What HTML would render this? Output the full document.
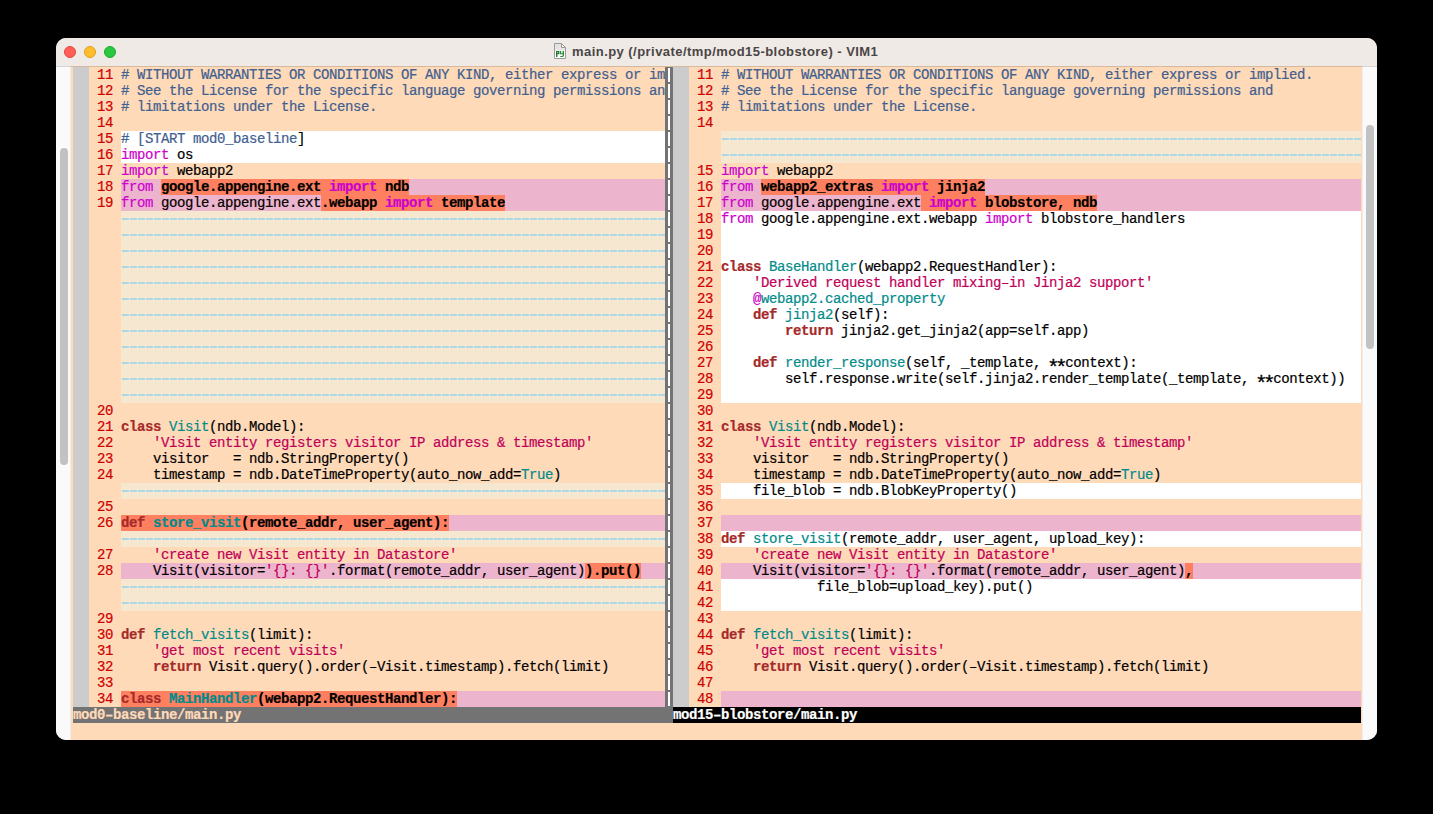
<!DOCTYPE html>
<html><head><meta charset="utf-8">
<style>
html,body{margin:0;padding:0;}
body{width:1433px;height:814px;background:#000;position:relative;overflow:hidden;}
.win{position:absolute;left:56px;top:38px;width:1321px;height:702px;border-radius:10px;overflow:hidden;background:#fafafa;}
.in{position:absolute;left:-56px;top:-38px;width:1433px;height:814px;}
.tb{position:absolute;left:56px;top:38px;width:1321px;height:28px;background:#efeae6;}
.tl{position:absolute;left:56px;top:66px;width:1321px;height:1px;background:rgba(0,0,0,0.15);z-index:5;}
.btn{position:absolute;top:46px;width:12px;height:12px;border-radius:50%;box-sizing:border-box;}
.title{position:absolute;left:572px;top:43px;height:18px;font:bold 13px/18px "Liberation Sans",sans-serif;color:#4a4545;white-space:pre;letter-spacing:0.45px;}
.ico{position:absolute;left:554px;top:43px;width:12px;height:16px;}
.peach{position:absolute;left:71px;top:66px;width:1291px;height:674px;background:#ffdab9;}
.sb{position:absolute;top:66px;height:674px;background:#fafafa;}
.sbl{box-shadow:inset -1px 0 #eceef0;}
.sbr{box-shadow:inset 1px 0 #eceef0;}
.th{position:absolute;width:8px;border-radius:4px;background:#c2c2c2;}
.r{position:absolute;left:73px;height:16px;display:flex;white-space:pre;font-family:"Liberation Mono",monospace;font-size:14px;letter-spacing:-0.4px;line-height:16px;color:#000;-webkit-text-stroke:0.2px currentColor;}
.r i,.r b{display:block;height:16px;font-style:normal;font-weight:normal;overflow:hidden;}
.f{width:16px;background:#ccc;}
.n{width:32px;color:#cd0000;}
.t1{width:544px;}
.t2{width:640px;}
.a{background:#fff;}
.ch{background:#edb5cd;}
.d{background:linear-gradient(90deg,#add8e6 7px,transparent 7px) 1px 7px/8px 2px repeat-x,#f6e8d0;}
.vs{width:8px;background:linear-gradient(#fff,#fff) 3px 1px/2px 14px no-repeat,#737373;}
.r .ast{display:inline-block;height:auto;overflow:visible;transform:translateY(5px) scale(1.5);}
.c{color:#406090}
.s{color:#c00058}
.i{color:#008b8b}
.k{color:#a52a2a;font-weight:bold}
.p{color:#cd00cd}
.x{font-weight:bold;background:#ff8060}
.st{position:absolute;top:707px;height:16px;white-space:pre;font-family:"Liberation Mono",monospace;font-size:14px;letter-spacing:-0.4px;line-height:16px;font-weight:bold;-webkit-text-stroke:0.2px currentColor;}
</style></head><body>
<div class="win"><div class="in">
<div class="tb"></div>
<div class="btn" style="left:64px;background:#ff5f57;border:0.5px solid #e2463f"></div>
<div class="btn" style="left:84px;background:#febc2e;border:0.5px solid #e1a116"></div>
<div class="btn" style="left:104px;background:#28c840;border:0.5px solid #1aab29"></div>
<svg class="ico" viewBox="0 0 12 16" width="12" height="16"><defs><linearGradient id="pg" x1="0" y1="0" x2="0" y2="1"><stop offset="0" stop-color="#e2e2e2"/><stop offset="0.45" stop-color="#e6e6e6"/><stop offset="0.5" stop-color="#fdfdfd"/><stop offset="1" stop-color="#fff"/></linearGradient></defs><path d="M0.5 0.5H7.5L11.5 4.5V15.5H0.5Z" fill="url(#pg)" stroke="#9e9a9a" stroke-width="1"/><path d="M7.5 0.5V4.5H11.5Z" fill="#fff" stroke="#9e9a9a" stroke-width="1" stroke-linejoin="round"/><path d="M2 8H5.3V11.2H3.4V14H2Z M3.4 9.1V10.1H4.1V9.1Z" fill="#1f7a2a" fill-rule="evenodd"/><path d="M5.8 8H7.2V10.2H8.6V8H10V12.6Q10 14 8.6 14H6.3V12.9H8.6V11.3H5.8Z" fill="#2a8a36"/></svg>
<div class="title">main.py (/private/tmp/mod15-blobstore) - VIM1</div>
<div class="tl"></div>
<div class="peach"></div>
<div class="sb sbl" style="left:56px;width:15px"></div>
<div class="sb sbr" style="left:1362px;width:15px"></div>
<div class="th" style="left:60px;top:148px;height:317px"></div>
<div class="th" style="left:1366px;top:125px;height:224px"></div>
<div class="r" style="top:67px"><i class="f"></i><b class="n"> 11 </b><b class="t1"><span class="c"># WITHOUT WARRANTIES OR CONDITIONS OF ANY KIND, either express or im</span></b><i class="vs"></i><i class="f"></i><b class="n"> 11 </b><b class="t2"><span class="c"># WITHOUT WARRANTIES OR CONDITIONS OF ANY KIND, either express or implied.</span></b></div>
<div class="r" style="top:83px"><i class="f"></i><b class="n"> 12 </b><b class="t1"><span class="c"># See the License for the specific language governing permissions an</span></b><i class="vs"></i><i class="f"></i><b class="n"> 12 </b><b class="t2"><span class="c"># See the License for the specific language governing permissions and</span></b></div>
<div class="r" style="top:99px"><i class="f"></i><b class="n"> 13 </b><b class="t1"><span class="c"># limitations under the License.</span></b><i class="vs"></i><i class="f"></i><b class="n"> 13 </b><b class="t2"><span class="c"># limitations under the License.</span></b></div>
<div class="r" style="top:115px"><i class="f"></i><b class="n"> 14 </b><b class="t1"></b><i class="vs"></i><i class="f"></i><b class="n"> 14 </b><b class="t2"></b></div>
<div class="r" style="top:131px"><i class="f"></i><b class="n"> 15 </b><b class="t1 a"><span class="c"># [START mod0_baseline</span>]</b><i class="vs"></i><i class="f"></i><b class="n">    </b><b class="t2 d"></b></div>
<div class="r" style="top:147px"><i class="f"></i><b class="n"> 16 </b><b class="t1 a"><span class="p">import</span> os</b><i class="vs"></i><i class="f"></i><b class="n">    </b><b class="t2 d"></b></div>
<div class="r" style="top:163px"><i class="f"></i><b class="n"> 17 </b><b class="t1"><span class="p">import</span> webapp2</b><i class="vs"></i><i class="f"></i><b class="n"> 15 </b><b class="t2"><span class="p">import</span> webapp2</b></div>
<div class="r" style="top:179px"><i class="f"></i><b class="n"> 18 </b><b class="t1 ch"><span class="p">from</span> <span class="x">google.appengine.ext </span><span class="p x">import</span><span class="x"> ndb</span></b><i class="vs"></i><i class="f"></i><b class="n"> 16 </b><b class="t2 ch"><span class="p">from</span> <span class="x">webapp2_extras </span><span class="p x">import</span><span class="x"> jinja2</span></b></div>
<div class="r" style="top:195px"><i class="f"></i><b class="n"> 19 </b><b class="t1 ch"><span class="p">from</span> google.appengine.ext<span class="x">.webapp </span><span class="p x">import</span><span class="x"> template</span></b><i class="vs"></i><i class="f"></i><b class="n"> 17 </b><b class="t2 ch"><span class="p">from</span> google.appengine.ext<span class="x"> </span><span class="p x">import</span><span class="x"> blobstore, ndb</span></b></div>
<div class="r" style="top:211px"><i class="f"></i><b class="n">    </b><b class="t1 d"></b><i class="vs"></i><i class="f"></i><b class="n"> 18 </b><b class="t2 a"><span class="p">from</span> google.appengine.ext.webapp <span class="p">import</span> blobstore_handlers</b></div>
<div class="r" style="top:227px"><i class="f"></i><b class="n">    </b><b class="t1 d"></b><i class="vs"></i><i class="f"></i><b class="n"> 19 </b><b class="t2 a"></b></div>
<div class="r" style="top:243px"><i class="f"></i><b class="n">    </b><b class="t1 d"></b><i class="vs"></i><i class="f"></i><b class="n"> 20 </b><b class="t2 a"></b></div>
<div class="r" style="top:259px"><i class="f"></i><b class="n">    </b><b class="t1 d"></b><i class="vs"></i><i class="f"></i><b class="n"> 21 </b><b class="t2 a"><span class="k">class</span> <span class="i">BaseHandler</span>(webapp2.RequestHandler):</b></div>
<div class="r" style="top:275px"><i class="f"></i><b class="n">    </b><b class="t1 d"></b><i class="vs"></i><i class="f"></i><b class="n"> 22 </b><b class="t2 a">    <span class="s">&#x27;Derived request handler mixing&#8211;in Jinja2 support&#x27;</span></b></div>
<div class="r" style="top:291px"><i class="f"></i><b class="n">    </b><b class="t1 d"></b><i class="vs"></i><i class="f"></i><b class="n"> 23 </b><b class="t2 a">    <span class="p">@</span><span class="i">webapp2.cached_property</span></b></div>
<div class="r" style="top:307px"><i class="f"></i><b class="n">    </b><b class="t1 d"></b><i class="vs"></i><i class="f"></i><b class="n"> 24 </b><b class="t2 a">    <span class="k">def</span> <span class="i">jinja2</span>(self):</b></div>
<div class="r" style="top:323px"><i class="f"></i><b class="n">    </b><b class="t1 d"></b><i class="vs"></i><i class="f"></i><b class="n"> 25 </b><b class="t2 a">        <span class="k">return</span> jinja2.get_jinja2(app=self.app)</b></div>
<div class="r" style="top:339px"><i class="f"></i><b class="n">    </b><b class="t1 d"></b><i class="vs"></i><i class="f"></i><b class="n"> 26 </b><b class="t2 a"></b></div>
<div class="r" style="top:355px"><i class="f"></i><b class="n">    </b><b class="t1 d"></b><i class="vs"></i><i class="f"></i><b class="n"> 27 </b><b class="t2 a">    <span class="k">def</span> <span class="i">render_response</span>(self, _template, <i class="ast">*</i><i class="ast">*</i>context):</b></div>
<div class="r" style="top:371px"><i class="f"></i><b class="n">    </b><b class="t1 d"></b><i class="vs"></i><i class="f"></i><b class="n"> 28 </b><b class="t2 a">        self.response.write(self.jinja2.render_template(_template, <i class="ast">*</i><i class="ast">*</i>context))</b></div>
<div class="r" style="top:387px"><i class="f"></i><b class="n">    </b><b class="t1 d"></b><i class="vs"></i><i class="f"></i><b class="n"> 29 </b><b class="t2 a"></b></div>
<div class="r" style="top:403px"><i class="f"></i><b class="n"> 20 </b><b class="t1"></b><i class="vs"></i><i class="f"></i><b class="n"> 30 </b><b class="t2"></b></div>
<div class="r" style="top:419px"><i class="f"></i><b class="n"> 21 </b><b class="t1"><span class="k">class</span> <span class="i">Visit</span>(ndb.Model):</b><i class="vs"></i><i class="f"></i><b class="n"> 31 </b><b class="t2"><span class="k">class</span> <span class="i">Visit</span>(ndb.Model):</b></div>
<div class="r" style="top:435px"><i class="f"></i><b class="n"> 22 </b><b class="t1">    <span class="s">&#x27;Visit entity registers visitor IP address &amp; timestamp&#x27;</span></b><i class="vs"></i><i class="f"></i><b class="n"> 32 </b><b class="t2">    <span class="s">&#x27;Visit entity registers visitor IP address &amp; timestamp&#x27;</span></b></div>
<div class="r" style="top:451px"><i class="f"></i><b class="n"> 23 </b><b class="t1">    visitor   = ndb.StringProperty()</b><i class="vs"></i><i class="f"></i><b class="n"> 33 </b><b class="t2">    visitor   = ndb.StringProperty()</b></div>
<div class="r" style="top:467px"><i class="f"></i><b class="n"> 24 </b><b class="t1">    timestamp = ndb.DateTimeProperty(auto_now_add=<span class="i">True</span>)</b><i class="vs"></i><i class="f"></i><b class="n"> 34 </b><b class="t2">    timestamp = ndb.DateTimeProperty(auto_now_add=<span class="i">True</span>)</b></div>
<div class="r" style="top:483px"><i class="f"></i><b class="n">    </b><b class="t1 d"></b><i class="vs"></i><i class="f"></i><b class="n"> 35 </b><b class="t2 a">    file_blob = ndb.BlobKeyProperty()</b></div>
<div class="r" style="top:499px"><i class="f"></i><b class="n"> 25 </b><b class="t1"></b><i class="vs"></i><i class="f"></i><b class="n"> 36 </b><b class="t2"></b></div>
<div class="r" style="top:515px"><i class="f"></i><b class="n"> 26 </b><b class="t1 ch"><span class="k x">def</span><span class="x"> </span><span class="i x">store_visit</span><span class="x">(remote_addr, user_agent):</span></b><i class="vs"></i><i class="f"></i><b class="n"> 37 </b><b class="t2 ch"></b></div>
<div class="r" style="top:531px"><i class="f"></i><b class="n">    </b><b class="t1 d"></b><i class="vs"></i><i class="f"></i><b class="n"> 38 </b><b class="t2 a"><span class="k">def</span> <span class="i">store_visit</span>(remote_addr, user_agent, upload_key):</b></div>
<div class="r" style="top:547px"><i class="f"></i><b class="n"> 27 </b><b class="t1">    <span class="s">&#x27;create new Visit entity in Datastore&#x27;</span></b><i class="vs"></i><i class="f"></i><b class="n"> 39 </b><b class="t2">    <span class="s">&#x27;create new Visit entity in Datastore&#x27;</span></b></div>
<div class="r" style="top:563px"><i class="f"></i><b class="n"> 28 </b><b class="t1 ch">    Visit(visitor=<span class="s">&#x27;{}: {}&#x27;</span>.format(remote_addr, user_agent)<span class="x">).put()</span></b><i class="vs"></i><i class="f"></i><b class="n"> 40 </b><b class="t2 ch">    Visit(visitor=<span class="s">&#x27;{}: {}&#x27;</span>.format(remote_addr, user_agent)<span class="x">,</span></b></div>
<div class="r" style="top:579px"><i class="f"></i><b class="n">    </b><b class="t1 d"></b><i class="vs"></i><i class="f"></i><b class="n"> 41 </b><b class="t2 a">            file_blob=upload_key).put()</b></div>
<div class="r" style="top:595px"><i class="f"></i><b class="n">    </b><b class="t1 d"></b><i class="vs"></i><i class="f"></i><b class="n"> 42 </b><b class="t2 a"></b></div>
<div class="r" style="top:611px"><i class="f"></i><b class="n"> 29 </b><b class="t1"></b><i class="vs"></i><i class="f"></i><b class="n"> 43 </b><b class="t2"></b></div>
<div class="r" style="top:627px"><i class="f"></i><b class="n"> 30 </b><b class="t1"><span class="k">def</span> <span class="i">fetch_visits</span>(limit):</b><i class="vs"></i><i class="f"></i><b class="n"> 44 </b><b class="t2"><span class="k">def</span> <span class="i">fetch_visits</span>(limit):</b></div>
<div class="r" style="top:643px"><i class="f"></i><b class="n"> 31 </b><b class="t1">    <span class="s">&#x27;get most recent visits&#x27;</span></b><i class="vs"></i><i class="f"></i><b class="n"> 45 </b><b class="t2">    <span class="s">&#x27;get most recent visits&#x27;</span></b></div>
<div class="r" style="top:659px"><i class="f"></i><b class="n"> 32 </b><b class="t1">    <span class="k">return</span> Visit.query().order(&#8211;Visit.timestamp).fetch(limit)</b><i class="vs"></i><i class="f"></i><b class="n"> 46 </b><b class="t2">    <span class="k">return</span> Visit.query().order(&#8211;Visit.timestamp).fetch(limit)</b></div>
<div class="r" style="top:675px"><i class="f"></i><b class="n"> 33 </b><b class="t1"></b><i class="vs"></i><i class="f"></i><b class="n"> 47 </b><b class="t2"></b></div>
<div class="r" style="top:691px"><i class="f"></i><b class="n"> 34 </b><b class="t1 ch"><span class="k x">class</span><span class="x"> </span><span class="i x">MainHandler</span><span class="x">(webapp2.RequestHandler):</span></b><i class="vs"></i><i class="f"></i><b class="n"> 48 </b><b class="t2 ch"></b></div>
<div class="st" style="left:73px;width:600px;background:#737373;color:#ffdab9">mod0&#8211;baseline/main.py</div>
<div class="st" style="left:673px;width:688px;background:#000;color:#fff">mod15&#8211;blobstore/main.py</div>
</div></div>
</body></html>
